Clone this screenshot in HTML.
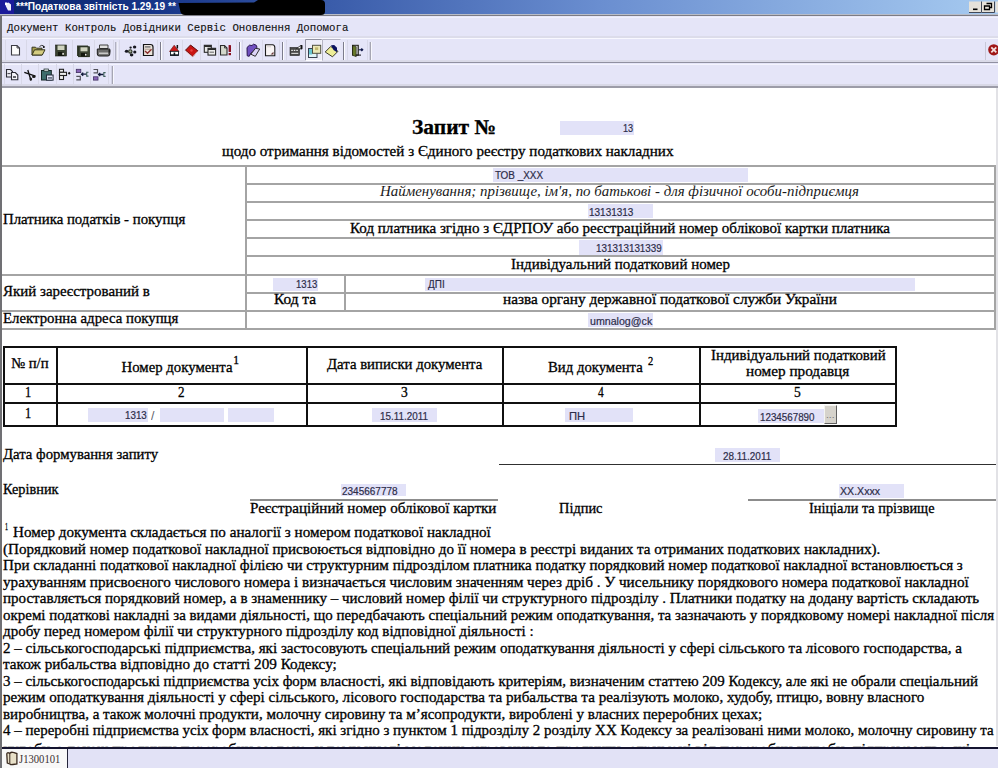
<!DOCTYPE html>
<html><head><meta charset="utf-8">
<style>
*{margin:0;padding:0;box-sizing:border-box}
html,body{width:998px;height:768px;overflow:hidden;background:#fff;position:relative}
body{font-family:"Liberation Serif",serif;color:#111}
.s{-webkit-text-stroke:0.3px currentColor}
.b{-webkit-text-stroke:0.2px currentColor}
.a{position:absolute;white-space:pre;transform-origin:0 0}
.ic{position:absolute}
</style></head><body>
<!-- title bar -->
<div class="a" style="left:0;top:0;width:998px;height:14px;background:linear-gradient(to right,#0a246a 0%,#163488 15%,#3a5caa 33%,#6a8ed0 60%,#a6caf0 100%)"></div>
<div class="a" style="left:0;top:0;width:14px;height:14px;background:#1a1a9a"></div>

<div class="a" style="left:0;top:14px;width:998px;height:1px;background:#b8bcc8"></div>
<div class="a" style="left:0;top:15px;width:998px;height:1px;background:#7c7c84"></div>
<!-- left frame -->
<div class="a" style="left:0;top:16px;width:2px;height:752px;background:#707074"></div>
<!-- menu -->
<div class="a" style="left:2px;top:16px;width:996px;height:22px;background:#e5e5f8"></div>
<div class="a" style="left:2px;top:17px;width:996px;height:1px;background:#f0f0fc"></div>
<div class="a" style="left:2px;top:36px;width:996px;height:2px;background:#dcdcea"></div>
<div class="a" style="left:2px;top:38px;width:996px;height:1px;background:#f8f8ff"></div>
<!-- toolbar 1 -->
<div class="a" style="left:2px;top:39px;width:996px;height:23px;background:#e5e5f8"></div>
<div class="a" style="left:2px;top:60px;width:996px;height:2px;background:#dadae8"></div>
<div class="a" style="left:2px;top:62px;width:996px;height:1px;background:#9090a0"></div>
<!-- toolbar 2 -->
<div class="a" style="left:2px;top:63px;width:996px;height:23px;background:#e5e5f8"></div>
<div class="a" style="left:2px;top:64px;width:996px;height:1px;background:#f4f4fe"></div>
<div class="a" style="left:2px;top:84px;width:996px;height:2px;background:#d8d8e6"></div>
<div class="a" style="left:2px;top:86px;width:996px;height:2px;background:#9c9ca8"></div>
<svg class="ic" style="left:0;top:0" width="998" height="90" viewBox="0 0 998 90">
<!-- title icon -->
<path d="M5 3.5 L8.5 2.5 L11 4.5 L11 10.5 L8 10.5 L6 6.5 Z" fill="#eeeef8"/>
<rect x="5" y="2.5" width="2" height="2.5" fill="#fff"/>
<!-- redaction -->
<path d="M178.5 3 L254 2.5 L258 0 L321 0 Q325 0 325 4 L325 11.5 Q325 15 321 15 L185 15 Q181.5 15 180.5 12 Z" fill="#000"/>
<!-- window buttons -->
<rect x="969" y="1.5" width="12.5" height="11" fill="#e6e2da"/>
<path d="M969 12.5 H981.5 V1.5" fill="none" stroke="#404858" stroke-width="1"/>
<rect x="973" y="8.5" width="4.5" height="1.6" fill="#000"/>
<rect x="982" y="1.5" width="12.5" height="11" fill="#e6e2da"/>
<path d="M982 12.5 H994.5 V1.5" fill="none" stroke="#404858" stroke-width="1"/>
<path d="M986.5 3.5 h5 v4 h-1.5 M984.5 6 h5 v3.5 h-5 z" fill="none" stroke="#000" stroke-width="1.3"/>
<rect x="995.5" y="1.5" width="2.5" height="11" fill="#e6e2da"/>

<!-- toolbar 1 button frames (subtle) -->
<g stroke="#d8d8e8" stroke-width="1">
<path d="M5.5 40 V61 M26.5 40 V61 M49.5 40 V61 M72.5 40 V61 M94.5 40 V61 M113.5 40 V61"/>
<path d="M119.5 40 V61 M140.5 40 V61 M157.5 40 V61"/>
<path d="M163.5 40 V61 M182.5 40 V61 M200.5 40 V61 M218.5 40 V61 M236.5 40 V61"/>
<path d="M242.5 40 V61 M262.5 40 V61 M279.5 40 V61"/>
<path d="M286.5 40 V61"/>
<path d="M347.5 40 V61 M367.5 40 V61"/>
</g>
<!-- separators tb1 -->
<g>
<rect x="115.5" y="42" width="1" height="18" fill="#7c7c8c"/><rect x="116.5" y="42" width="1" height="18" fill="#fcfcff"/>
<rect x="160" y="42" width="1" height="18" fill="#7c7c8c"/><rect x="161" y="42" width="1" height="18" fill="#fcfcff"/>
<rect x="239" y="42" width="1" height="18" fill="#7c7c8c"/><rect x="240" y="42" width="1" height="18" fill="#fcfcff"/>
<rect x="282" y="42" width="1" height="18" fill="#7c7c8c"/><rect x="283" y="42" width="1" height="18" fill="#fcfcff"/>
<rect x="343" y="42" width="1" height="18" fill="#7c7c8c"/><rect x="344" y="42" width="1" height="18" fill="#fcfcff"/>
<rect x="369.8" y="42" width="1" height="18" fill="#7c7c8c"/><rect x="370.8" y="42" width="1" height="18" fill="#fcfcff"/>
<rect x="985" y="42" width="1" height="18" fill="#c8c8d8"/>
</g>
<!-- 1 new doc -->
<path d="M11.5 45.5 H17 L19.5 48 V55 H11.5 Z" fill="#fcfcfc" stroke="#3c3c44" stroke-width="1.1"/>
<path d="M17 45.5 V48 H19.5" fill="none" stroke="#3c3c44" stroke-width="0.9"/>
<!-- 2 open folder -->
<path d="M32 47.2 h3.5 l1 1 h5.5 v6.8 h-10 z" fill="#a8a050" stroke="#34341c" stroke-width="1"/>
<path d="M32 55 l2.5 -5.2 h10.5 l-2.7 5.2 z" fill="#d4cc80" stroke="#34341c" stroke-width="1"/>
<path d="M39.5 46.5 q2 -1.8 4 -0.8" fill="none" stroke="#222" stroke-width="0.9"/>
<circle cx="43.8" cy="47" r="1" fill="#000"/>
<!-- 3 save -->
<rect x="55.5" y="45" width="11" height="11" fill="#384030" stroke="#1c2018" stroke-width="0.6"/>
<rect x="57.5" y="45.5" width="7" height="4.5" fill="#d0d4c0"/>
<rect x="58" y="52" width="6" height="4" fill="#141810"/>
<rect x="62.3" y="52.8" width="1.6" height="2" fill="#e8e8e0"/>
<!-- 4 save all -->
<path d="M77 45.5 h11 v1 h1.5 V57 H78.5 v-1 H77 Z" fill="#384030"/>
<rect x="78.5" y="46.8" width="11" height="10" fill="#3c4434" stroke="#222a1c" stroke-width="0.6"/>
<rect x="80.5" y="47.3" width="7" height="4" fill="#d0d4c0"/>
<rect x="81" y="53" width="6" height="3.5" fill="#141810"/>
<rect x="85" y="53.8" width="1.5" height="1.8" fill="#e8e8e0"/>
<!-- 5 print -->
<path d="M99.5 45 h8.5 v3.5 h-8.5 z" fill="#e0e0e0" stroke="#303030" stroke-width="0.9"/>
<path d="M97.3 49 h12.5 v5 a2 2 0 0 1 -2 2 h-8.5 a2 2 0 0 1 -2 -2 z" fill="#6c6c6c" stroke="#1c1c1c" stroke-width="1"/>
<rect x="99" y="52.5" width="9" height="1.6" fill="#c8c8c8"/>
<rect x="108.5" y="50" width="1.8" height="2.5" fill="#202020"/>
<!-- 6 tools -->
<g fill="#181820">
<ellipse cx="134.6" cy="46.9" rx="1.7" ry="1.5"/>
<ellipse cx="130.6" cy="47.6" rx="1.2" ry="1.1"/>
<ellipse cx="126.6" cy="51.3" rx="1.8" ry="1.5"/>
<ellipse cx="134.8" cy="52" rx="1.6" ry="1.5"/>
<ellipse cx="131.6" cy="55" rx="1.8" ry="1.4"/>
</g>
<circle cx="130.3" cy="51.4" r="1.7" fill="#a8b0a0" stroke="#283020" stroke-width="1.1"/>
<!-- 7 checklist -->
<path d="M143.5 44.5 H150.5 Q153 44.5 153 47 V55.5 H143.5 Z" fill="#ece4dc" stroke="#141414" stroke-width="1.2"/>
<rect x="145" y="46.2" width="5.5" height="1.4" fill="#707070"/>
<path d="M145 51 l2.5 2.3 l4 -4" fill="none" stroke="#8a2c2c" stroke-width="1.4"/>
<rect x="145" y="48.8" width="6" height="0.7" fill="#9a8070"/>
<!-- 8 house -->
<path d="M169.5 51.5 L174.2 45.2 L179 51.5 Z" fill="#cc1a1a" stroke="#681010" stroke-width="0.6"/>
<rect x="176.6" y="45" width="1.5" height="3.5" fill="#111"/>
<rect x="170.5" y="51.3" width="8" height="4.2" fill="#fff" stroke="#101820" stroke-width="0.9"/>
<rect x="173.6" y="52.5" width="1.6" height="3" fill="#101820"/>
<rect x="170.5" y="54.3" width="8" height="1.2" fill="#101820"/>
<!-- 9 red book -->
<path d="M185.5 50.2 L190.5 45 L197.8 50.8 L192.8 56.5 Z" fill="#c81414" stroke="#5a0a0a" stroke-width="1"/>
<path d="M186.3 51.8 L192.5 56.8 L197.5 51.3" fill="none" stroke="#f0b8b8" stroke-width="0.8"/>
<circle cx="191.5" cy="50.5" r="1.2" fill="#e84040"/>
<!-- 10 windows -->
<rect x="204.3" y="45.3" width="7" height="7" fill="#e8e8e8" stroke="#282828" stroke-width="1.1"/>
<rect x="204.3" y="45.3" width="7" height="1.7" fill="#282828"/>
<rect x="208" y="48.3" width="7.6" height="6.8" fill="#ececec" stroke="#282828" stroke-width="1.1"/>
<rect x="208" y="48.3" width="7.6" height="1.7" fill="#282828"/>
<rect x="209.5" y="51.5" width="4.5" height="1.5" fill="#909090"/>
<!-- 11 doc ! -->
<path d="M220.5 45.5 H224.5 L227 48 V55 H220.5 Z" fill="#d4d8cc" stroke="#2c2c2c" stroke-width="1.1"/>
<path d="M224.5 45.5 V48 H227" fill="none" stroke="#2c2c2c" stroke-width="0.8"/>
<rect x="228.6" y="45" width="2.4" height="7" fill="#8a1020" rx="0.6"/>
<rect x="228.6" y="53" width="2.4" height="2.2" fill="#8a1020"/>
<!-- 12 purple -->
<path d="M247 47.5 L249.5 45.2 L252 45.5 L253.5 44.2 L256.2 45.2 L257 47.2 L254 51.5 L251 53 L249.2 56.3 L247.2 55.8 Z" fill="#7050c0" stroke="#2a1650" stroke-width="1"/>
<path d="M250.8 54.2 L255.5 48.3 L259.7 49 L255.3 56.3 Z" fill="#dcd4f8" stroke="#1c1c1c" stroke-width="0.9"/>
<!-- 13 doc pen -->
<path d="M265.5 44.8 H272.5 Q274.8 45 274.8 47.5 V55.8 H265.5 Z" fill="#f8f4f4" stroke="#1c1c1c" stroke-width="1.1"/>
<rect x="267" y="46.5" width="4" height="0.7" fill="#c8c0c0"/>
<path d="M270.5 54.5 l3 -2.8 v2.8 z" fill="#6a3c3c"/>
<!-- 14 settings -->
<rect x="290" y="47.5" width="9.5" height="8" fill="#484848" stroke="#202020" stroke-width="0.6"/>
<g fill="#f0f0f0"><rect x="291.3" y="49.8" width="1.5" height="1.2"/><rect x="293.8" y="49.8" width="1.5" height="1.2"/><rect x="296.3" y="49.8" width="1.5" height="1.2"/>
<rect x="291.3" y="52.8" width="7" height="1.2" fill="#d0d0d0"/></g>
<path d="M296.5 48.5 l4 -2.8 l1.5 -0.3 v3.5 z" fill="#f8f8f8" stroke="#111" stroke-width="0.7"/>
<rect x="300.5" y="45" width="1.7" height="4.2" fill="#111"/>
<!-- 15 pressed buttons -->
<rect x="305.5" y="39.5" width="16.5" height="21" fill="#ececf8"/>
<path d="M305.5 60.5 V39.5 H322" fill="none" stroke="#9090a0" stroke-width="1"/>
<path d="M322 39.5 V60.5 H305.5" fill="none" stroke="#fcfcff" stroke-width="1"/>
<rect x="308.5" y="48.5" width="8.5" height="9" fill="#e0f4f8" stroke="#384050" stroke-width="1"/>
<rect x="309" y="49" width="3.2" height="5.5" fill="#68c4d0"/>
<rect x="312.5" y="45.3" width="8.2" height="8" fill="#ece8b8" stroke="#505040" stroke-width="1"/>
<rect x="315" y="47.3" width="3.2" height="2.8" fill="#c0b870"/>
<rect x="322.5" y="39.5" width="18" height="21" fill="#eaeaf8"/>
<path d="M322.5 60.5 V39.5 H340.5" fill="none" stroke="#b4b4c4" stroke-width="1"/>
<path d="M325.2 52 l5.5 -5.5 l7.3 4.8 l-5.5 5.5 z" fill="#eeee98" stroke="#282818" stroke-width="0.9"/>
<path d="M331 45.2 l3.2 -0.3 l2.8 2.8 v4.5 l-3.5 -2.2 z" fill="#0c1460"/>
<!-- 17 exit -->
<path d="M352 44.8 h6.8 v10.8 h-6.8 z" fill="#1c1c14"/>
<rect x="353.4" y="45.8" width="4.2" height="8.8" fill="#e8e8f0"/>
<path d="M352.6 45.5 l3.6 1.2 v10 l-3.6 -1.4 z" fill="#687a2c" stroke="#1c1c14" stroke-width="0.6"/>
<rect x="355.5" y="54.6" width="5.5" height="1" fill="#111"/>
<path d="M360 49.8 l1.8 -1.8 l1.8 1.8 l-1.8 1.8 z" fill="#101848"/>
<rect x="358.5" y="49.3" width="2" height="1" fill="#101848"/>
<!-- close icon -->
<circle cx="993.8" cy="49.8" r="5.6" fill="#a01818"/>
<path d="M991.3 47.3 l5 5 M996.3 47.3 l-5 5" stroke="#f4e0e0" stroke-width="1.8"/>

<!-- toolbar 2 frames -->
<g stroke="#d8d8e8" stroke-width="1">
<path d="M4.5 64 V85 M21.5 64 V85 M38.5 64 V85 M56.5 64 V85 M73.5 64 V85 M90.5 64 V85 M108.5 64 V85"/>
</g>
<rect x="111.8" y="66" width="1" height="18" fill="#7c7c8c"/><rect x="112.8" y="66" width="1" height="18" fill="#fcfcff"/>
<!-- t2 1 copy -->
<path d="M6.5 69.5 H10.5 L12.5 71.5 V77 H6.5 Z" fill="#ececf4" stroke="#2a2a34" stroke-width="1.1"/>
<rect x="7.5" y="73.2" width="3" height="0.9" fill="#2a2a34"/>
<path d="M11.5 72.5 H15.3 L17.8 75 V79.8 H11.5 Z" fill="#f4f4fa" stroke="#2a2a34" stroke-width="1.1"/>
<rect x="13" y="76.2" width="3" height="1.6" fill="#404048"/>
<!-- t2 2 scissors -->
<path d="M24.3 72.3 L35.5 76.2 M27.8 70 L31 80.5" stroke="#101010" stroke-width="1.3" fill="none"/>
<ellipse cx="33.8" cy="76.8" rx="1.8" ry="1.3" fill="#181818"/>
<ellipse cx="30.8" cy="79" rx="1.3" ry="1.6" fill="#181818"/>
<!-- t2 3 paste -->
<rect x="41.5" y="70.5" width="9.8" height="9.5" fill="#3e6c6c" stroke="#142424" stroke-width="1"/>
<rect x="44" y="69" width="4.5" height="2.2" fill="#d8e0e0" stroke="#142424" stroke-width="0.7"/>
<rect x="46.5" y="75" width="6.6" height="5.2" fill="#e4e8f8" stroke="#202838" stroke-width="1"/>
<rect x="47.8" y="77.4" width="4.2" height="1.1" fill="#283048"/>
<!-- t2 4 -->
<rect x="59.5" y="69.3" width="4" height="3" fill="#f0f0f0" stroke="#202020" stroke-width="1.1"/>
<rect x="59.5" y="72.3" width="7" height="3.2" fill="#f0f0f0" stroke="#202020" stroke-width="1.1"/>
<rect x="59.5" y="75.5" width="4" height="4" fill="#f0f0f0" stroke="#202020" stroke-width="1.1"/>
<path d="M67.8 73.2 l1.4 -1.5 l1.4 1.5 l-1.4 1.5 z" fill="#101010"/>
<!-- t2 5 -->
<rect x="76.3" y="69.3" width="4.5" height="3.3" fill="#8864b8" stroke="#403060" stroke-width="0.8"/>
<path d="M76.3 76.3 h4 v3.5 h-4" fill="none" stroke="#505058" stroke-width="1.2"/>
<path d="M81.5 74.2 h5 M83.2 72.6 l-1.7 1.6 l1.7 1.6" stroke="#101838" stroke-width="1.3" fill="none"/>
<path d="M88.5 72.3 h-1.8 v3.8 h1.8" fill="none" stroke="#40605c" stroke-width="1.1"/>
<!-- t2 6 -->
<path d="M93.5 69.5 h4 v3.3 h-4" fill="none" stroke="#505058" stroke-width="1.2"/>
<rect x="93.5" y="76.8" width="4.5" height="3.3" fill="#8864b8" stroke="#403060" stroke-width="0.8"/>
<path d="M98.5 74.5 h5 M100.2 72.9 l-1.7 1.6 l1.7 1.6" stroke="#101838" stroke-width="1.3" fill="none"/>
<path d="M105.6 72.6 h-1.8 v3.8 h1.8" fill="none" stroke="#40605c" stroke-width="1.1"/>
<!-- right edge tick -->
<rect x="995.5" y="99.5" width="2.5" height="2" fill="#303030"/>
</svg>


<div class="a" style="left:996px;top:88px;width:2px;height:658px;background:#e2e2e6;"></div>
<div class="a" style="left:560px;top:121px;width:74px;height:13.5px;background:#e2e2f8;"></div>
<div class="a" style="left:2px;top:165px;width:994px;height:2px;background:#a4a4a4;"></div>
<div class="a" style="left:2px;top:274px;width:994px;height:2px;background:#a4a4a4;"></div>
<div class="a" style="left:2px;top:310px;width:994px;height:2px;background:#a4a4a4;"></div>
<div class="a" style="left:2px;top:328px;width:994px;height:2px;background:#a4a4a4;"></div>
<div class="a" style="left:245px;top:183px;width:751px;height:2px;background:#a4a4a4;"></div>
<div class="a" style="left:245px;top:201px;width:751px;height:2px;background:#a4a4a4;"></div>
<div class="a" style="left:245px;top:219px;width:751px;height:2px;background:#a4a4a4;"></div>
<div class="a" style="left:245px;top:237px;width:751px;height:2px;background:#a4a4a4;"></div>
<div class="a" style="left:245px;top:255px;width:751px;height:2px;background:#a4a4a4;"></div>
<div class="a" style="left:245px;top:292px;width:751px;height:2px;background:#a4a4a4;"></div>
<div class="a" style="left:245px;top:165px;width:2px;height:165px;background:#a4a4a4;"></div>
<div class="a" style="left:994px;top:165px;width:2px;height:165px;background:#a4a4a4;"></div>
<div class="a" style="left:344px;top:274px;width:2px;height:38px;background:#a4a4a4;"></div>
<div class="a" style="left:493.3px;top:168px;width:254.7px;height:14.4px;background:#e2e2f8;"></div>
<div class="a" style="left:588px;top:204px;width:65px;height:14.4px;background:#e2e2f8;"></div>
<div class="a" style="left:579px;top:240.4px;width:83.6px;height:14.9px;background:#e2e2f8;"></div>
<div class="a" style="left:272.6px;top:278px;width:45.4px;height:12.6px;background:#e2e2f8;"></div>
<div class="a" style="left:425.2px;top:278px;width:490.3px;height:12.6px;background:#e2e2f8;"></div>
<div class="a" style="left:588.3px;top:313.4px;width:64.3px;height:13.8px;background:#e2e2f8;"></div>
<div class="a" style="left:3px;top:346px;width:894px;height:2px;background:#101010;"></div>
<div class="a" style="left:3px;top:382.5px;width:894px;height:2.0px;background:#101010;"></div>
<div class="a" style="left:3px;top:402px;width:894px;height:2px;background:#101010;"></div>
<div class="a" style="left:3px;top:425px;width:894px;height:2px;background:#101010;"></div>
<div class="a" style="left:3px;top:346px;width:2px;height:81px;background:#101010;"></div>
<div class="a" style="left:55.5px;top:346px;width:2.0px;height:81px;background:#101010;"></div>
<div class="a" style="left:305.5px;top:346px;width:2.0px;height:81px;background:#101010;"></div>
<div class="a" style="left:502px;top:346px;width:2px;height:81px;background:#101010;"></div>
<div class="a" style="left:698.5px;top:346px;width:2.0px;height:81px;background:#101010;"></div>
<div class="a" style="left:895px;top:346px;width:2px;height:81px;background:#101010;"></div>
<div class="a" style="left:88px;top:408px;width:59.8px;height:13.7px;background:#e2e2f8;"></div>
<div class="a" style="left:159.5px;top:408px;width:64.7px;height:13.7px;background:#e2e2f8;"></div>
<div class="a" style="left:228.4px;top:408px;width:45.2px;height:13.7px;background:#e2e2f8;"></div>
<div class="a" style="left:371.6px;top:408px;width:65.4px;height:14px;background:#e2e2f8;"></div>
<div class="a" style="left:564.9px;top:408px;width:68.3px;height:14px;background:#e2e2f8;"></div>
<div class="a" style="left:758px;top:408.8px;width:65.6px;height:14.5px;background:#e2e2f8;"></div>
<div class="a" style="left:823.6px;top:405.2px;width:13.2px;height:18.8px;background:#d6d3cc;border-top:1px solid #f4f4f0;border-left:1px solid #f4f4f0;border-right:1px solid #606060;border-bottom:1px solid #606060"></div>
<div class="a" style="left:715px;top:447.7px;width:64.8px;height:14.8px;background:#e2e2f8;"></div>
<div class="a" style="left:499px;top:463.5px;width:497px;height:1.5px;background:#303030;"></div>
<div class="a" style="left:340.8px;top:483.9px;width:64.9px;height:12.6px;background:#e2e2f8;"></div>
<div class="a" style="left:838.9px;top:484px;width:65.0px;height:13.8px;background:#e2e2f8;"></div>
<div class="a" style="left:249.6px;top:499px;width:248.4px;height:2px;background:#8c8c8c;"></div>
<div class="a" style="left:748px;top:499px;width:248px;height:2px;background:#8c8c8c;"></div>
<div class="a" style="left:16.00px;top:1.03px;font-family:'Liberation Sans';font-size:10px;line-height:12.0px;font-weight:bold;font-style:normal;color:#fff;transform:scaleX(1.0126);">***Податкова звітність 1.29.19 **</div>
<div class="a" style="left:6.90px;top:21.85px;font-family:'Liberation Mono';font-size:10.8px;line-height:12.96px;font-weight:normal;font-style:normal;color:#111;transform:scaleX(0.9941);-webkit-text-stroke:0.12px #111">Документ Контроль Довідники Сервіс Оновлення Допомога</div>
<div class="a s" style="left:411.80px;top:115.01px;font-family:'Liberation Serif';font-size:21px;line-height:25.2px;font-weight:bold;font-style:normal;color:#000;transform:scaleX(1.0238);">Запит №</div>
<div class="a b" style="left:623.10px;top:121.61px;font-family:'Liberation Sans';font-size:11.4px;line-height:13.68px;font-weight:normal;font-style:normal;color:#2c2c48;transform:scaleX(0.8026);">13</div>
<div class="a s" style="left:221.50px;top:142.63px;font-family:'Liberation Serif';font-size:14.8px;line-height:17.76px;font-weight:normal;font-style:normal;color:#000;transform:scaleX(1.0205);">щодо отримання відомостей з Єдиного реєстру податкових накладних</div>
<div class="a s" style="left:3.00px;top:210.73px;font-family:'Liberation Serif';font-size:14.8px;line-height:17.76px;font-weight:normal;font-style:normal;color:#000;transform:scaleX(1.0022);">Платника податків - покупця</div>
<div class="a b" style="left:495.40px;top:168.91px;font-family:'Liberation Sans';font-size:11.4px;line-height:13.68px;font-weight:normal;font-style:normal;color:#2c2c48;transform:scaleX(0.8705);">ТОВ _ХХХ</div>
<div class="a s" style="left:380.01px;top:182.73px;font-family:'Liberation Serif';font-size:14.8px;line-height:17.76px;font-weight:normal;font-style:italic;color:#1a1a1a;transform:scaleX(1.0070);-webkit-text-stroke:0">Найменування; прізвище, ім&#x27;я, по батькові - для фізичної особи-підприємця</div>
<div class="a b" style="left:589.30px;top:205.61px;font-family:'Liberation Sans';font-size:11.4px;line-height:13.68px;font-weight:normal;font-style:normal;color:#2c2c48;transform:scaleX(0.8760);">13131313</div>
<div class="a s" style="left:350.00px;top:219.63px;font-family:'Liberation Serif';font-size:14.8px;line-height:17.76px;font-weight:normal;font-style:normal;color:#000;transform:scaleX(1.0175);">Код платника згідно з ЄДРПОУ або реєстраційний номер облікової картки платника</div>
<div class="a b" style="left:596.00px;top:242.21px;font-family:'Liberation Sans';font-size:11.4px;line-height:13.68px;font-weight:normal;font-style:normal;color:#2c2c48;transform:scaleX(0.8654);">131313131339</div>
<div class="a s" style="left:511.20px;top:255.63px;font-family:'Liberation Serif';font-size:14.8px;line-height:17.76px;font-weight:normal;font-style:normal;color:#000;transform:scaleX(1.0130);">Індивідуальний податковий номер</div>
<div class="a s" style="left:3.00px;top:282.53px;font-family:'Liberation Serif';font-size:14.8px;line-height:17.76px;font-weight:normal;font-style:normal;color:#000;transform:scaleX(1.0121);">Який зареєстрований в</div>
<div class="a b" style="left:295.80px;top:278.21px;font-family:'Liberation Sans';font-size:11.4px;line-height:13.68px;font-weight:normal;font-style:normal;color:#2c2c48;transform:scaleX(0.8398);">1313</div>
<div class="a b" style="left:428.30px;top:278.21px;font-family:'Liberation Sans';font-size:11.4px;line-height:13.68px;font-weight:normal;font-style:normal;color:#2c2c48;transform:scaleX(0.8730);">ДПІ</div>
<div class="a s" style="left:273.50px;top:291.33px;font-family:'Liberation Serif';font-size:14.8px;line-height:17.76px;font-weight:normal;font-style:normal;color:#000;transform:scaleX(1.0371);">Код та</div>
<div class="a s" style="left:502.80px;top:291.33px;font-family:'Liberation Serif';font-size:14.8px;line-height:17.76px;font-weight:normal;font-style:normal;color:#000;transform:scaleX(1.0308);">назва органу державної податкової служби України</div>
<div class="a s" style="left:3.00px;top:309.83px;font-family:'Liberation Serif';font-size:14.8px;line-height:17.76px;font-weight:normal;font-style:normal;color:#000;">Електронна адреса покупця</div>
<div class="a b" style="left:589.50px;top:314.61px;font-family:'Liberation Sans';font-size:11.4px;line-height:13.68px;font-weight:normal;font-style:normal;color:#2c2c48;transform:scaleX(0.9335);">umnalog@ck</div>
<div class="a s" style="left:10.50px;top:355.43px;font-family:'Liberation Serif';font-size:14.8px;line-height:17.76px;font-weight:normal;font-style:normal;color:#000;transform:scaleX(0.9935);">№ п/п</div>
<div class="a s" style="left:121.50px;top:358.73px;font-family:'Liberation Serif';font-size:14.8px;line-height:17.76px;font-weight:normal;font-style:normal;color:#000;">Номер документа</div>
<div class="a s" style="left:233.20px;top:354.22px;font-family:'Liberation Serif';font-size:11.5px;line-height:13.8px;font-weight:normal;font-style:normal;color:#000;">1</div>
<div class="a s" style="left:327.00px;top:355.63px;font-family:'Liberation Serif';font-size:14.8px;line-height:17.76px;font-weight:normal;font-style:normal;color:#000;transform:scaleX(0.9986);">Дата виписки документа</div>
<div class="a s" style="left:547.60px;top:358.73px;font-family:'Liberation Serif';font-size:14.8px;line-height:17.76px;font-weight:normal;font-style:normal;color:#000;transform:scaleX(0.9956);">Вид документа</div>
<div class="a s" style="left:647.80px;top:354.72px;font-family:'Liberation Serif';font-size:11.5px;line-height:13.8px;font-weight:normal;font-style:normal;color:#000;transform:scaleX(0.9167);">2</div>
<div class="a s" style="left:710.60px;top:346.93px;font-family:'Liberation Serif';font-size:14.8px;line-height:17.76px;font-weight:normal;font-style:normal;color:#000;transform:scaleX(1.0033);">Індивідуальний податковий</div>
<div class="a s" style="left:745.90px;top:363.03px;font-family:'Liberation Serif';font-size:14.8px;line-height:17.76px;font-weight:normal;font-style:normal;color:#000;transform:scaleX(1.0313);">номер продавця</div>
<div class="a s" style="left:25.47px;top:383.73px;font-family:'Liberation Serif';font-size:14.8px;line-height:17.76px;font-weight:normal;font-style:normal;color:#000;transform:scaleX(0.8333);">1</div>
<div class="a s" style="left:177.90px;top:383.73px;font-family:'Liberation Serif';font-size:14.8px;line-height:17.76px;font-weight:normal;font-style:normal;color:#000;transform:scaleX(0.8857);">2</div>
<div class="a s" style="left:401.00px;top:383.73px;font-family:'Liberation Serif';font-size:14.8px;line-height:17.76px;font-weight:normal;font-style:normal;color:#000;transform:scaleX(0.9143);">3</div>
<div class="a s" style="left:597.60px;top:383.73px;font-family:'Liberation Serif';font-size:14.8px;line-height:17.76px;font-weight:normal;font-style:normal;color:#000;transform:scaleX(0.7750);">4</div>
<div class="a s" style="left:794.00px;top:383.73px;font-family:'Liberation Serif';font-size:14.8px;line-height:17.76px;font-weight:normal;font-style:normal;color:#000;transform:scaleX(0.9143);">5</div>
<div class="a s" style="left:25.47px;top:405.03px;font-family:'Liberation Serif';font-size:14.8px;line-height:17.76px;font-weight:normal;font-style:normal;color:#000;transform:scaleX(0.8333);">1</div>
<div class="a b" style="left:124.80px;top:409.41px;font-family:'Liberation Sans';font-size:11.4px;line-height:13.68px;font-weight:normal;font-style:normal;color:#2c2c48;transform:scaleX(0.8598);">1313</div>
<div class="a" style="left:151.20px;top:407.69px;font-family:'Liberation Sans';font-size:13px;line-height:15.6px;font-weight:normal;font-style:normal;color:#606068;transform:scaleX(0.9500);">/</div>
<div class="a b" style="left:379.80px;top:409.61px;font-family:'Liberation Sans';font-size:11.4px;line-height:13.68px;font-weight:normal;font-style:normal;color:#2c2c48;transform:scaleX(0.8657);">15.11.2011</div>
<div class="a b" style="left:569.20px;top:409.61px;font-family:'Liberation Sans';font-size:11.4px;line-height:13.68px;font-weight:normal;font-style:normal;color:#2c2c48;transform:scaleX(0.9884);">ПН</div>
<div class="a b" style="left:759.80px;top:410.91px;font-family:'Liberation Sans';font-size:11.4px;line-height:13.68px;font-weight:normal;font-style:normal;color:#2c2c48;transform:scaleX(0.8601);">1234567890</div>
<div class="a" style="left:826.00px;top:409.98px;font-family:'Liberation Sans';font-size:9px;line-height:10.8px;font-weight:normal;font-style:normal;color:#777;transform:scaleX(1.1427);">...</div>
<div class="a s" style="left:3.00px;top:446.03px;font-family:'Liberation Serif';font-size:14.8px;line-height:17.76px;font-weight:normal;font-style:normal;color:#000;transform:scaleX(0.9972);">Дата формування запиту</div>
<div class="a b" style="left:723.10px;top:449.61px;font-family:'Liberation Sans';font-size:11.4px;line-height:13.68px;font-weight:normal;font-style:normal;color:#2c2c48;transform:scaleX(0.8712);">28.11.2011</div>
<div class="a s" style="left:3.00px;top:480.63px;font-family:'Liberation Serif';font-size:14.8px;line-height:17.76px;font-weight:normal;font-style:normal;color:#000;transform:scaleX(0.9672);">Керівник</div>
<div class="a b" style="left:342.00px;top:485.11px;font-family:'Liberation Sans';font-size:11.4px;line-height:13.68px;font-weight:normal;font-style:normal;color:#2c2c48;transform:scaleX(0.8776);">2345667778</div>
<div class="a b" style="left:840.00px;top:485.21px;font-family:'Liberation Sans';font-size:11.4px;line-height:13.68px;font-weight:normal;font-style:normal;color:#2c2c48;transform:scaleX(0.9297);">XX.Xxxx</div>
<div class="a s" style="left:250.00px;top:499.83px;font-family:'Liberation Serif';font-size:14.8px;line-height:17.76px;font-weight:normal;font-style:normal;color:#000;transform:scaleX(1.0187);">Реєстраційний номер облікової картки</div>
<div class="a s" style="left:558.60px;top:499.63px;font-family:'Liberation Serif';font-size:14.8px;line-height:17.76px;font-weight:normal;font-style:normal;color:#000;transform:scaleX(0.9720);">Підпис</div>
<div class="a s" style="left:808.50px;top:499.83px;font-family:'Liberation Serif';font-size:14.8px;line-height:17.76px;font-weight:normal;font-style:normal;color:#000;transform:scaleX(0.9672);">Ініціали та прізвище</div>
<div class="a s" style="left:4.80px;top:519.89px;font-family:'Liberation Serif';font-size:11px;line-height:13.2px;font-weight:normal;font-style:normal;color:#000;transform:scaleX(0.5400);">1</div>
<div class="a s" style="left:12.50px;top:524.43px;font-family:'Liberation Serif';font-size:14.8px;line-height:17.76px;font-weight:normal;font-style:normal;color:#000;transform:scaleX(1.0214);">Номер документа складається по аналогії з номером податкової накладної</div>
<div class="a s" style="left:3.00px;top:540.90px;font-family:'Liberation Serif';font-size:14.8px;line-height:17.76px;font-weight:normal;font-style:normal;color:#000;transform:scaleX(1.0188);">(Порядковий номер податкової накладної присвоюється відповідно до її номера в реєстрі виданих та отриманих податкових накладних).</div>
<div class="a s" style="left:3.00px;top:557.37px;font-family:'Liberation Serif';font-size:14.8px;line-height:17.76px;font-weight:normal;font-style:normal;color:#000;transform:scaleX(1.0185);">При складанні податкової накладної філією чи структурним підрозділом платника податку порядковий номер податкової накладної встановлюється з</div>
<div class="a s" style="left:3.00px;top:573.84px;font-family:'Liberation Serif';font-size:14.8px;line-height:17.76px;font-weight:normal;font-style:normal;color:#000;transform:scaleX(1.0259);">урахуванням присвоєного числового номера і визначається числовим значенням через дріб . У чисельнику порядкового номера податкової накладної</div>
<div class="a s" style="left:3.00px;top:590.31px;font-family:'Liberation Serif';font-size:14.8px;line-height:17.76px;font-weight:normal;font-style:normal;color:#000;transform:scaleX(1.0153);">проставляється порядковий номер, а в знаменнику – числовий номер філії чи структурного підрозділу . Платники податку на додану вартість складають</div>
<div class="a s" style="left:3.00px;top:606.78px;font-family:'Liberation Serif';font-size:14.8px;line-height:17.76px;font-weight:normal;font-style:normal;color:#000;transform:scaleX(1.0113);">окремі податкові накладні за видами діяльності, що передбачають спеціальний режим оподаткування, та зазначають у порядковому номері накладної після</div>
<div class="a s" style="left:3.00px;top:623.25px;font-family:'Liberation Serif';font-size:14.8px;line-height:17.76px;font-weight:normal;font-style:normal;color:#000;transform:scaleX(1.0164);">дробу перед номером філії чи структурного підрозділу код відповідної діяльності :</div>
<div class="a s" style="left:3.00px;top:639.72px;font-family:'Liberation Serif';font-size:14.8px;line-height:17.76px;font-weight:normal;font-style:normal;color:#000;transform:scaleX(1.0179);">2 – сільськогосподарські підприємства, які застосовують спеціальний режим оподаткування діяльності у сфері сільського та лісового господарства, а</div>
<div class="a s" style="left:3.00px;top:656.19px;font-family:'Liberation Serif';font-size:14.8px;line-height:17.76px;font-weight:normal;font-style:normal;color:#000;transform:scaleX(1.0259);">також рибальства відповідно до статті 209 Кодексу;</div>
<div class="a s" style="left:3.00px;top:672.66px;font-family:'Liberation Serif';font-size:14.8px;line-height:17.76px;font-weight:normal;font-style:normal;color:#000;transform:scaleX(1.0107);">3 – сільськогосподарські підприємства усіх форм власності, які відповідають критеріям, визначеним статтею 209 Кодексу, але які не обрали спеціальний</div>
<div class="a s" style="left:3.00px;top:689.13px;font-family:'Liberation Serif';font-size:14.8px;line-height:17.76px;font-weight:normal;font-style:normal;color:#000;transform:scaleX(1.0214);">режим оподаткування діяльності у сфері сільського, лісового господарства та рибальства та реалізують молоко, худобу, птицю, вовну власного</div>
<div class="a s" style="left:3.00px;top:705.60px;font-family:'Liberation Serif';font-size:14.8px;line-height:17.76px;font-weight:normal;font-style:normal;color:#000;transform:scaleX(1.0163);">виробництва, а також молочні продукти, молочну сировину та м’ясопродукти, вироблені у власних переробних цехах;</div>
<div class="a s" style="left:3.00px;top:722.07px;font-family:'Liberation Serif';font-size:14.8px;line-height:17.76px;font-weight:normal;font-style:normal;color:#000;transform:scaleX(1.0128);">4 – переробні підприємства усіх форм власності, які згідно з пунктом 1 підрозділу 2 розділу ХХ Кодексу за реалізовані ними молоко, молочну сировину та</div>
<div class="a s" style="left:3.00px;top:740.54px;font-family:'Liberation Serif';font-size:14.8px;line-height:17.76px;font-weight:normal;font-style:normal;color:#000;transform:scaleX(1.0996);">худобу, а також продукти переробки молока, у тому числі молочну сировину та продукти, отримані від переробки худоби, підприємства які</div>
<div class="a" style="left:0px;top:747px;width:998px;height:21px;background:#e2e2f6;border-top:2px solid #141430"></div>
<div class="a" style="left:0px;top:747px;width:2px;height:21px;background:#707074;"></div>
<div class="a" style="left:2px;top:749px;width:65.5px;height:19px;background:#f8f8f8;border-right:1.5px solid #24243a"></div>
<svg class="ic" style="left:0;top:740px" width="30" height="28"><path d="M6.8 14 q0 -1.5 1.8 -1.2 l1.2 0.5 q1.5 -1.5 3.5 -0.8 l3.6 1 v10.5 l-4 0.5 q-2 0.5 -3 -0.5 l-2.6 -1 z" fill="#e8e0c8" stroke="#3a2a20" stroke-width="1.3"/><path d="M9.8 13.3 v10" stroke="#3a2a20" stroke-width="1"/></svg>
<div class="a s" style="left:19.30px;top:751.94px;font-family:'Liberation Serif';font-size:11.8px;line-height:14.16px;font-weight:normal;font-style:normal;color:#3a3030;transform:scaleX(0.9025);-webkit-text-stroke:0">J1300101</div>
</body></html>
